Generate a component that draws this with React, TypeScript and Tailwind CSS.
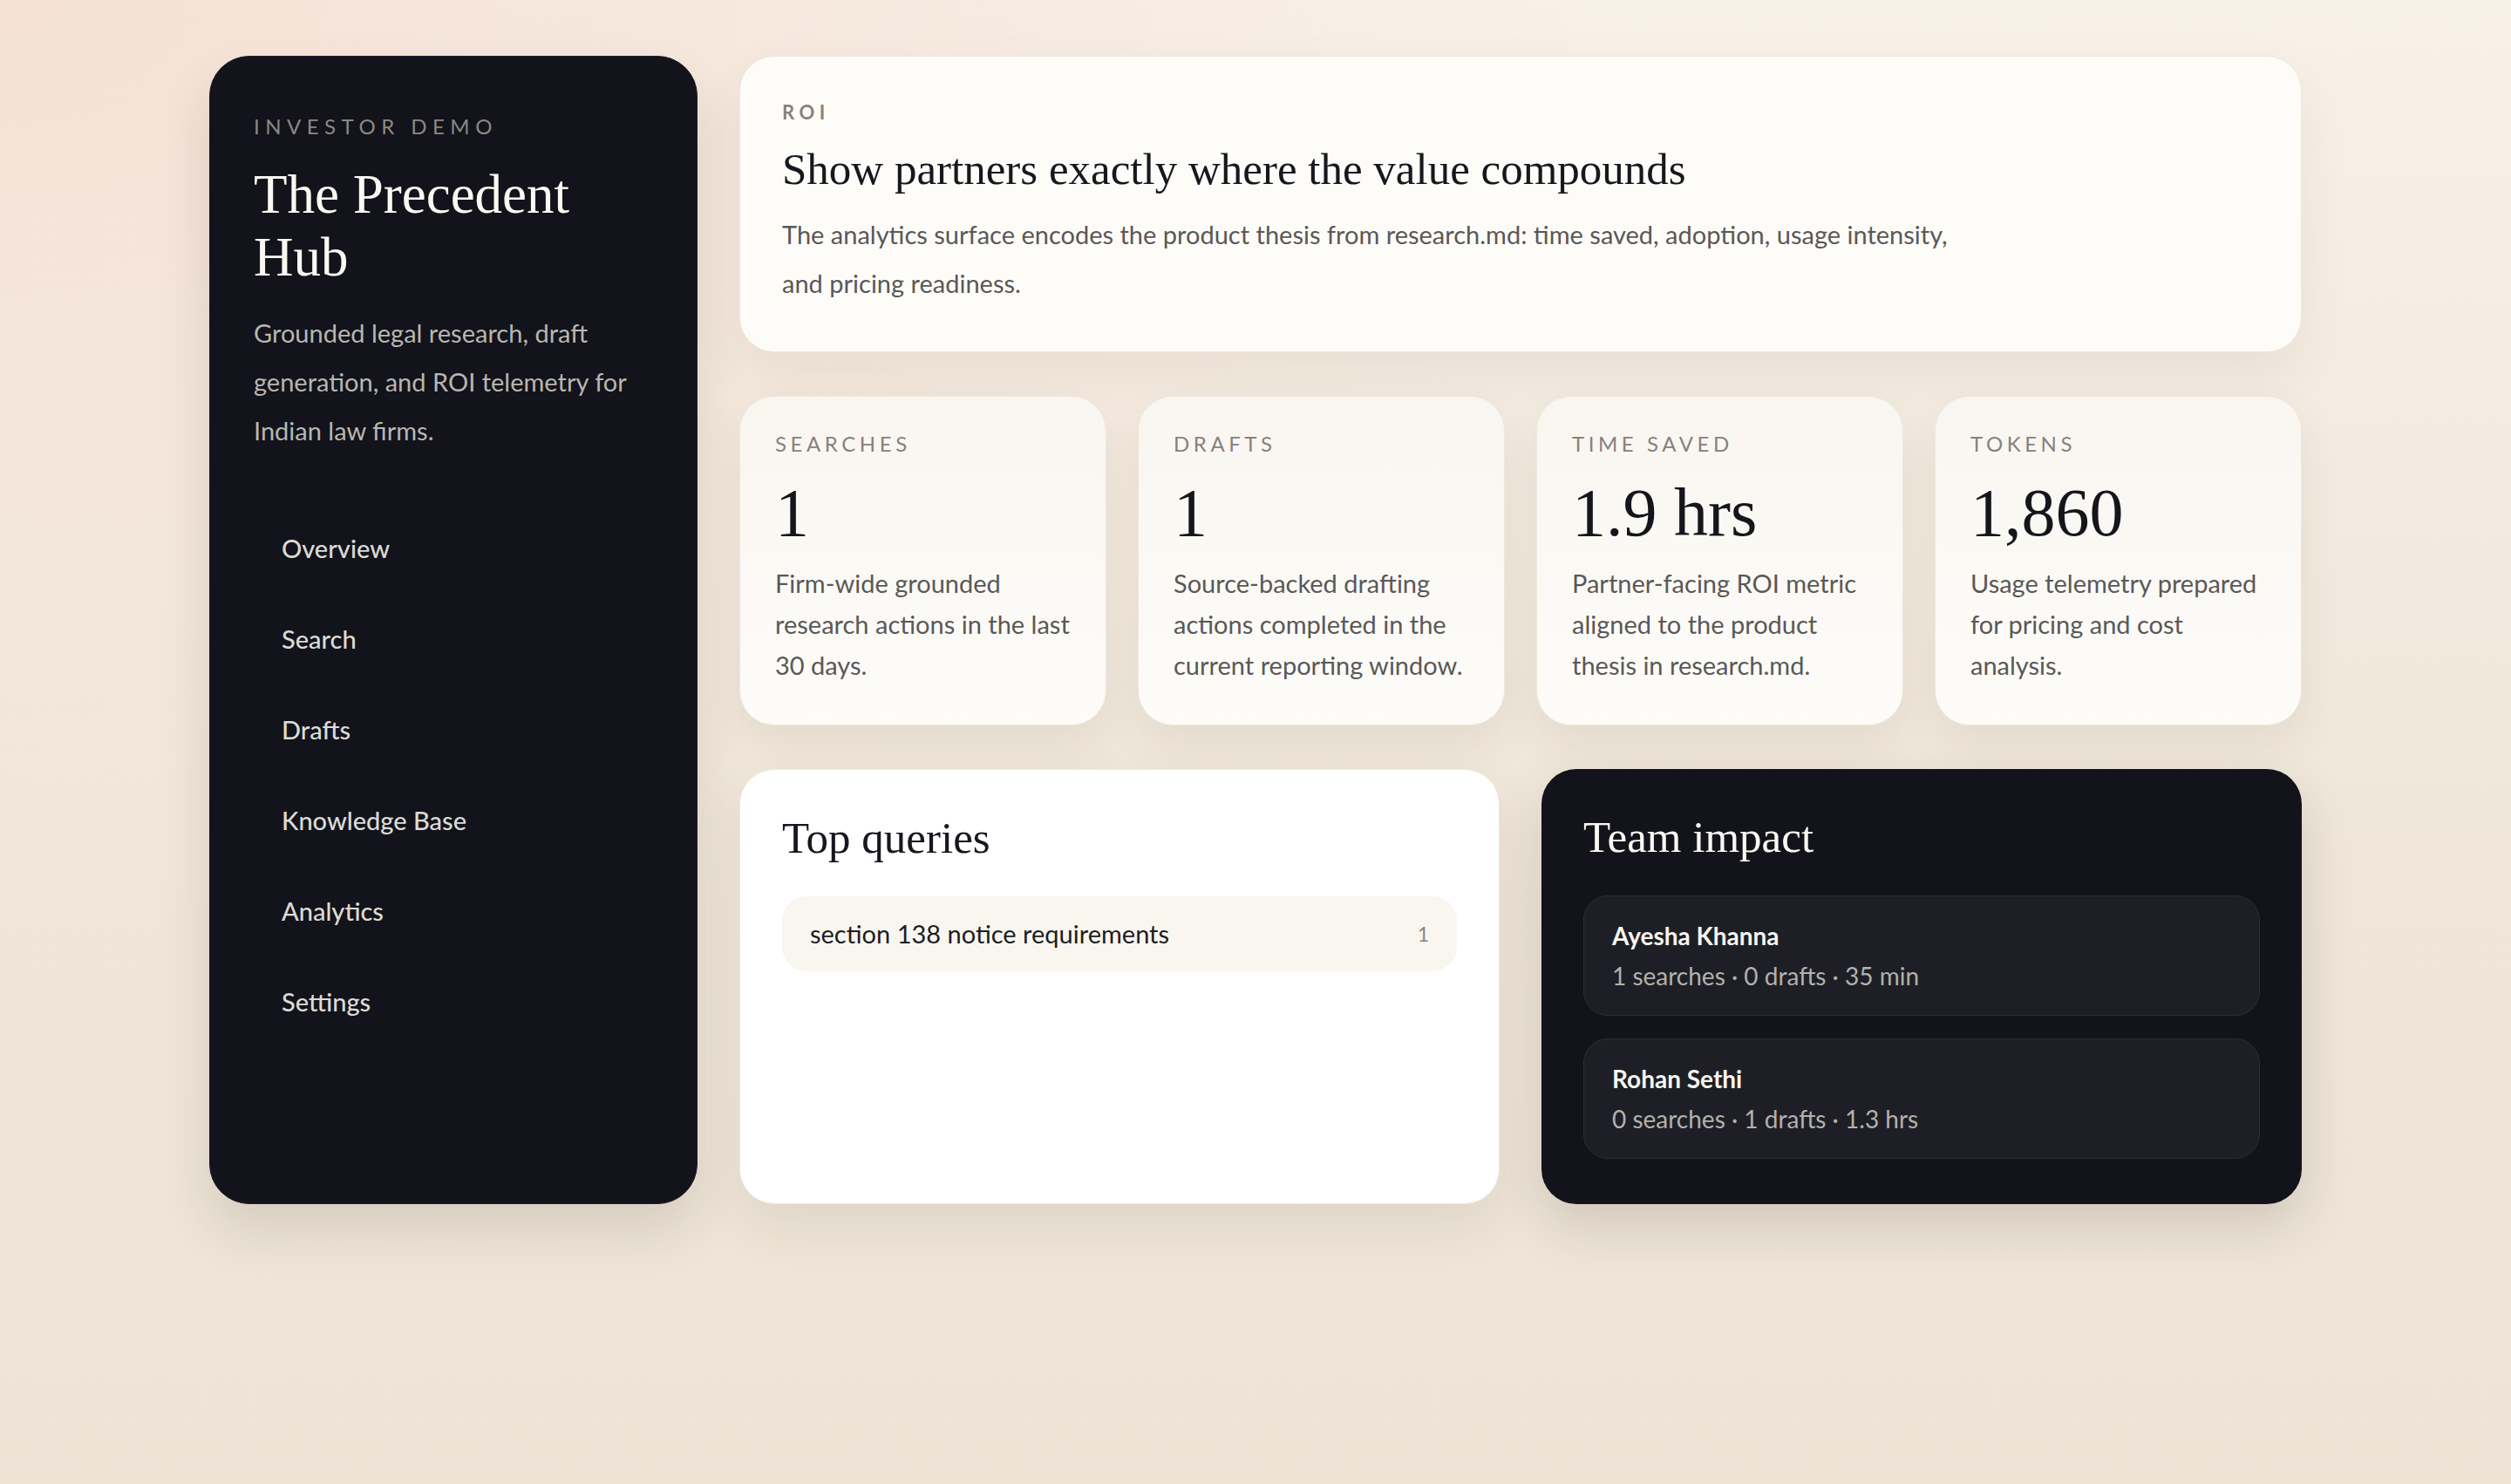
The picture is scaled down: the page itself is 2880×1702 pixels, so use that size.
import React from 'react';

const serif = "font-['Liberation_Serif',Georgia,serif]";

const navItems = ['Overview', 'Search', 'Drafts', 'Knowledge Base', 'Analytics', 'Settings'];

const stats = [
  { label: 'Searches', value: '1', note: 'Firm-wide grounded research actions in the last 30 days.' },
  { label: 'Drafts', value: '1', note: 'Source-backed drafting actions completed in the current reporting window.' },
  { label: 'Time saved', value: '1.9 hrs', note: 'Partner-facing ROI metric aligned to the product thesis in research.md.' },
  { label: 'Tokens', value: '1,860', note: 'Usage telemetry prepared for pricing and cost analysis.' },
];

const team = [
  { name: 'Ayesha Khanna', line: '1 searches · 0 drafts · 35 min' },
  { name: 'Rohan Sethi', line: '0 searches · 1 drafts · 1.3 hrs' },
];

function Sidebar() {
  return (
    <aside className="w-[560px] shrink-0 rounded-[46px] bg-[#12131b] border border-[#1c1d26] px-[50px] pt-[64px] pb-12 shadow-[0_30px_60px_rgba(40,30,20,0.12)]">
      <div className="text-[24px] leading-[32px] tracking-[0.27em] text-[#8d8783]">INVESTOR DEMO</div>
      <h1 className={`${serif} mt-[26px] text-[63px] leading-[72px] text-[#fbf8f2]`}>The Precedent Hub</h1>
      <p className="mt-[23px] text-[29px] leading-[56px] text-[#b9b6b0]">
        Grounded legal research, draft generation, and ROI telemetry for Indian law firms.
      </p>
      <nav className="mt-[55px] flex flex-col">
        {navItems.map((item) => (
          <a key={item} className="px-8 py-8 text-[29px] leading-[40px] font-medium text-[#dcdad5]">
            {item}
          </a>
        ))}
      </nav>
    </aside>
  );
}

function StatCard({ label, value, note }: { label: string; value: string; note: string }) {
  return (
    <div className="rounded-[40px] border border-[#efe8dc] bg-[linear-gradient(180deg,#f9f6f0,#fdfcf9)] pl-10 pr-9 pt-10 pb-[45px] shadow-[0_20px_50px_rgba(70,50,30,0.08)]">
      <div className="text-[24px] leading-[28px] uppercase tracking-[0.19em] text-[#87817c]">{label}</div>
      <div className={`${serif} mt-[27px] text-[78px] leading-[76px] text-[#15151c]`}>{value}</div>
      <p className="mt-[19px] text-[29px] leading-[47px] text-[#5a5857]">{note}</p>
    </div>
  );
}

export default function App() {
  return (
    <div className="min-h-screen font-['Lato','Open_Sans',sans-serif] bg-[radial-gradient(ellipse_at_0%_0%,#f5e1d5_0%,transparent_45%),linear-gradient(180deg,#f8f1e8_0%,#efe6d9_60%,#ede4d6_100%)]">
      <div className="mx-auto flex w-[2400px] gap-12 pt-16 pb-16">
        <Sidebar />

        <main className="flex min-w-0 flex-1 flex-col gap-[50px]">
          <section className="rounded-[40px] border border-[#efe8dd] bg-[#fdfcf9] px-12 pt-12 pb-[50px] shadow-[0_24px_60px_rgba(70,50,30,0.07)]">
            <div className="text-[22px] leading-[32px] font-bold tracking-[0.25em] text-[#8a817b]">ROI</div>
            <h2 className={`${serif} mt-[19px] text-[51px] leading-[61px] text-[#17171f]`}>
              Show partners exactly where the value compounds
            </h2>
            <p className="mt-4 max-w-[1375px] text-[29px] leading-[56px] text-[#5a5857]">
              The analytics surface encodes the product thesis from research.md: time saved, adoption, usage intensity, and
              pricing readiness.
            </p>
          </section>

          <div className="grid grid-cols-4 gap-[36px]">
            {stats.map((s) => (
              <StatCard key={s.label} {...s} />
            ))}
          </div>

          <div className="grid grid-cols-2 gap-12">
            <section className="rounded-[40px] border border-[#efe8dd] bg-white px-12 pt-12 pb-12 shadow-[0_24px_60px_rgba(70,50,30,0.09)]">
              <h3 className={`${serif} text-[51px] leading-[61px] text-[#17171f]`}>Top queries</h3>
              <div className="mt-9 flex items-center justify-between rounded-[28px] bg-[#f9f6f0] px-8 py-[23px]">
                <span className="text-[29px] leading-[40px] text-[#1d1d22]">section 138 notice requirements</span>
                <span className="text-[23px] leading-[40px] text-[#8a8580]">1</span>
              </div>
            </section>

            <section className="rounded-[40px] bg-[#13141b] px-12 pt-12 pb-[52px] shadow-[0_24px_60px_rgba(40,30,20,0.15)]">
              <h3 className={`${serif} text-[51px] leading-[61px] text-[#fbf8f2]`}>Team impact</h3>
              <div className="mt-9 flex flex-col gap-[26px]">
                {team.map((m) => (
                  <div key={m.name} className="rounded-[28px] border border-[#2c2d35] bg-[#1e1f26] px-8 py-[25px]">
                    <div className="text-[28px] leading-[40px] font-bold text-[#f7f5f0]">{m.name}</div>
                    <div className="mt-[6px] text-[28px] leading-[40px] text-[#b3b1ac]">{m.line}</div>
                  </div>
                ))}
              </div>
            </section>
          </div>
        </main>
      </div>
    </div>
  );
}
